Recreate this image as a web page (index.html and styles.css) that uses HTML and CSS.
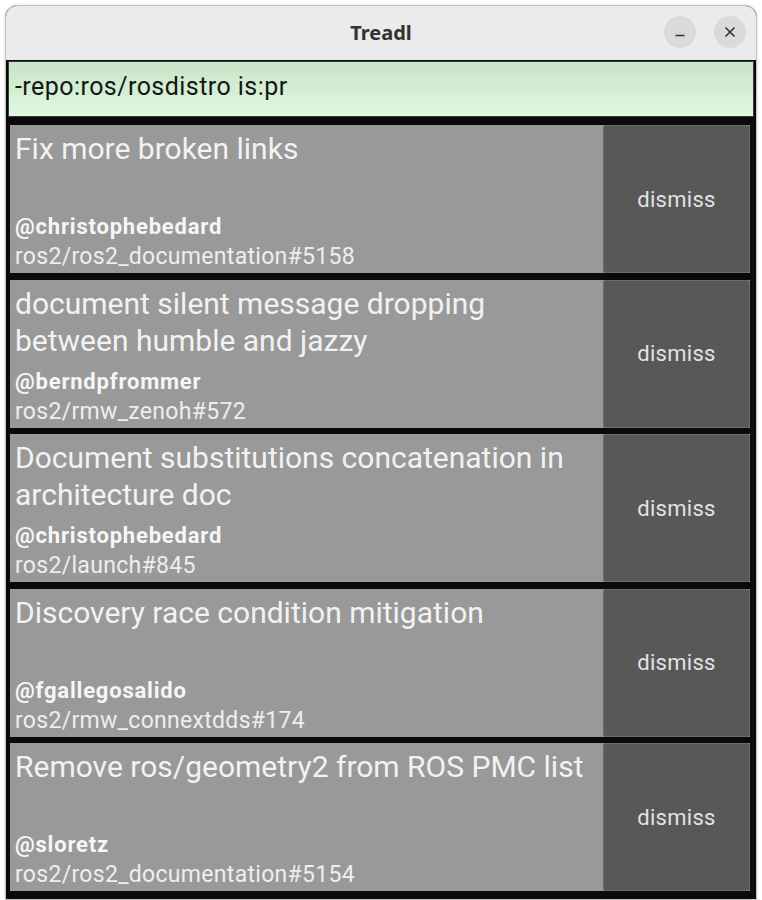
FILE: index.html
```html
<!DOCTYPE html>
<html>
<head>
<meta charset="utf-8">
<title>Treadl</title>
<link rel="stylesheet" href="styles.css">
</head>
<body>
<div class="window">
  <header class="titlebar">
    <span class="title">Treadl</span>
    <div class="controls">
      <button class="ctl" aria-label="minimize">
        <svg width="12" height="12" viewBox="0 0 12 12"><path d="M1.5 9.5h9" stroke="#2e2e2e" stroke-width="1.4" fill="none"/></svg>
      </button>
      <button class="ctl" aria-label="close">
        <svg width="12" height="12" viewBox="0 0 12 12"><path d="M1.5 1.5l9 9M10.5 1.5l-9 9" stroke="#2e2e2e" stroke-width="1.5" fill="none"/></svg>
      </button>
    </div>
  </header>
  <main class="content">
    <div class="search">-repo:ros/rosdistro is:pr</div>
    <div class="list">
      <div class="card">
        <div class="info">
          <div class="ttl">Fix more broken links</div>
          <div class="user">@christophebedard</div>
          <div class="repo">ros2/ros2_documentation#5158</div>
        </div>
        <div class="dismiss">dismiss</div>
      </div>
      <div class="card">
        <div class="info">
          <div class="ttl">document silent message dropping between humble and jazzy</div>
          <div class="user">@berndpfrommer</div>
          <div class="repo">ros2/rmw_zenoh#572</div>
        </div>
        <div class="dismiss">dismiss</div>
      </div>
      <div class="card">
        <div class="info">
          <div class="ttl">Document substitutions concatenation in architecture doc</div>
          <div class="user">@christophebedard</div>
          <div class="repo">ros2/launch#845</div>
        </div>
        <div class="dismiss">dismiss</div>
      </div>
      <div class="card">
        <div class="info">
          <div class="ttl">Discovery race condition mitigation</div>
          <div class="user">@fgallegosalido</div>
          <div class="repo">ros2/rmw_connextdds#174</div>
        </div>
        <div class="dismiss">dismiss</div>
      </div>
      <div class="card">
        <div class="info">
          <div class="ttl">Remove ros/geometry2 from ROS PMC list</div>
          <div class="user">@sloretz</div>
          <div class="repo">ros2/ros2_documentation#5154</div>
        </div>
        <div class="dismiss">dismiss</div>
      </div>
    </div>
  </main>
</div>
</body>
</html>
```

FILE: styles.css
```css
html, body {
  margin: 0;
  padding: 0;
  background: #ffffff;
  height: 900px;
  overflow: hidden;
}

.window {
  margin: 5px 5px 0 5px;
  height: 893px;
  border: 1px solid #c4c4c4;
  border-radius: 12px 12px 0 0;
  box-shadow: 0 0 3px rgba(0, 0, 0, 0.18);
  display: flex;
  flex-direction: column;
  overflow: hidden;
  background: #0a0a0a;
}

.titlebar {
  height: 54px;
  flex: none;
  background: #ebebeb;
  position: relative;
  display: flex;
  align-items: center;
  justify-content: center;
}

.title {
  font-family: "Noto Sans", "DejaVu Sans", sans-serif;
  font-weight: 700;
  font-size: 20px;
  color: #333333;
  margin-top: -1px;
}

.controls {
  position: absolute;
  right: 10px;
  top: 10px;
  display: flex;
  gap: 18px;
}

.ctl {
  width: 32px;
  height: 32px;
  border-radius: 50%;
  border: none;
  background: #dadada;
  padding: 0;
  display: flex;
  align-items: center;
  justify-content: center;
}

.content {
  flex: 1;
  background: #0a0a0a;
  padding: 1px 0 0 0;
}

.search {
  margin: 0 2px;
  height: 54px;
  border: 1px solid #3c3c3c;
  background: linear-gradient(#c8e4c8, #e0f8e0);
  font-family: Roboto, "Liberation Sans", sans-serif;
  font-size: 25px;
  letter-spacing: 0.45px;
  color: #161616;
  line-height: 50px;
  padding-left: 6px;
}

.list {
  margin: 8px 6px 0 4px;
  display: flex;
  flex-direction: column;
  gap: 6.5px;
}

.card {
  height: 148px;
  background: #999999;
  display: flex;
}

.info {
  flex: 1;
  display: flex;
  flex-direction: column;
  padding: 5px 0 1px 5px;
  font-family: Roboto, "Liberation Sans", sans-serif;
  color: #f2f2f2;
}

.ttl {
  font-size: 30px;
  line-height: 37px;
  height: 74px;
  flex: none;
}

.user {
  margin-top: auto;
  font-weight: 700;
  font-size: 22px;
  letter-spacing: 0.8px;
  line-height: 30px;
  color: #f6f6f6;
}

.repo {
  font-size: 23px;
  letter-spacing: 0.3px;
  line-height: 30px;
  color: #eeeeee;
}

.dismiss {
  width: 145px;
  flex: none;
  background: #585858;
  border: 1px solid #6c6c6c;
  border-radius: 2px;
  display: flex;
  align-items: center;
  justify-content: center;
  font-family: Roboto, "Liberation Sans", sans-serif;
  font-size: 22px;
  letter-spacing: 0.3px;
  color: #e2e2e2;
}
```
